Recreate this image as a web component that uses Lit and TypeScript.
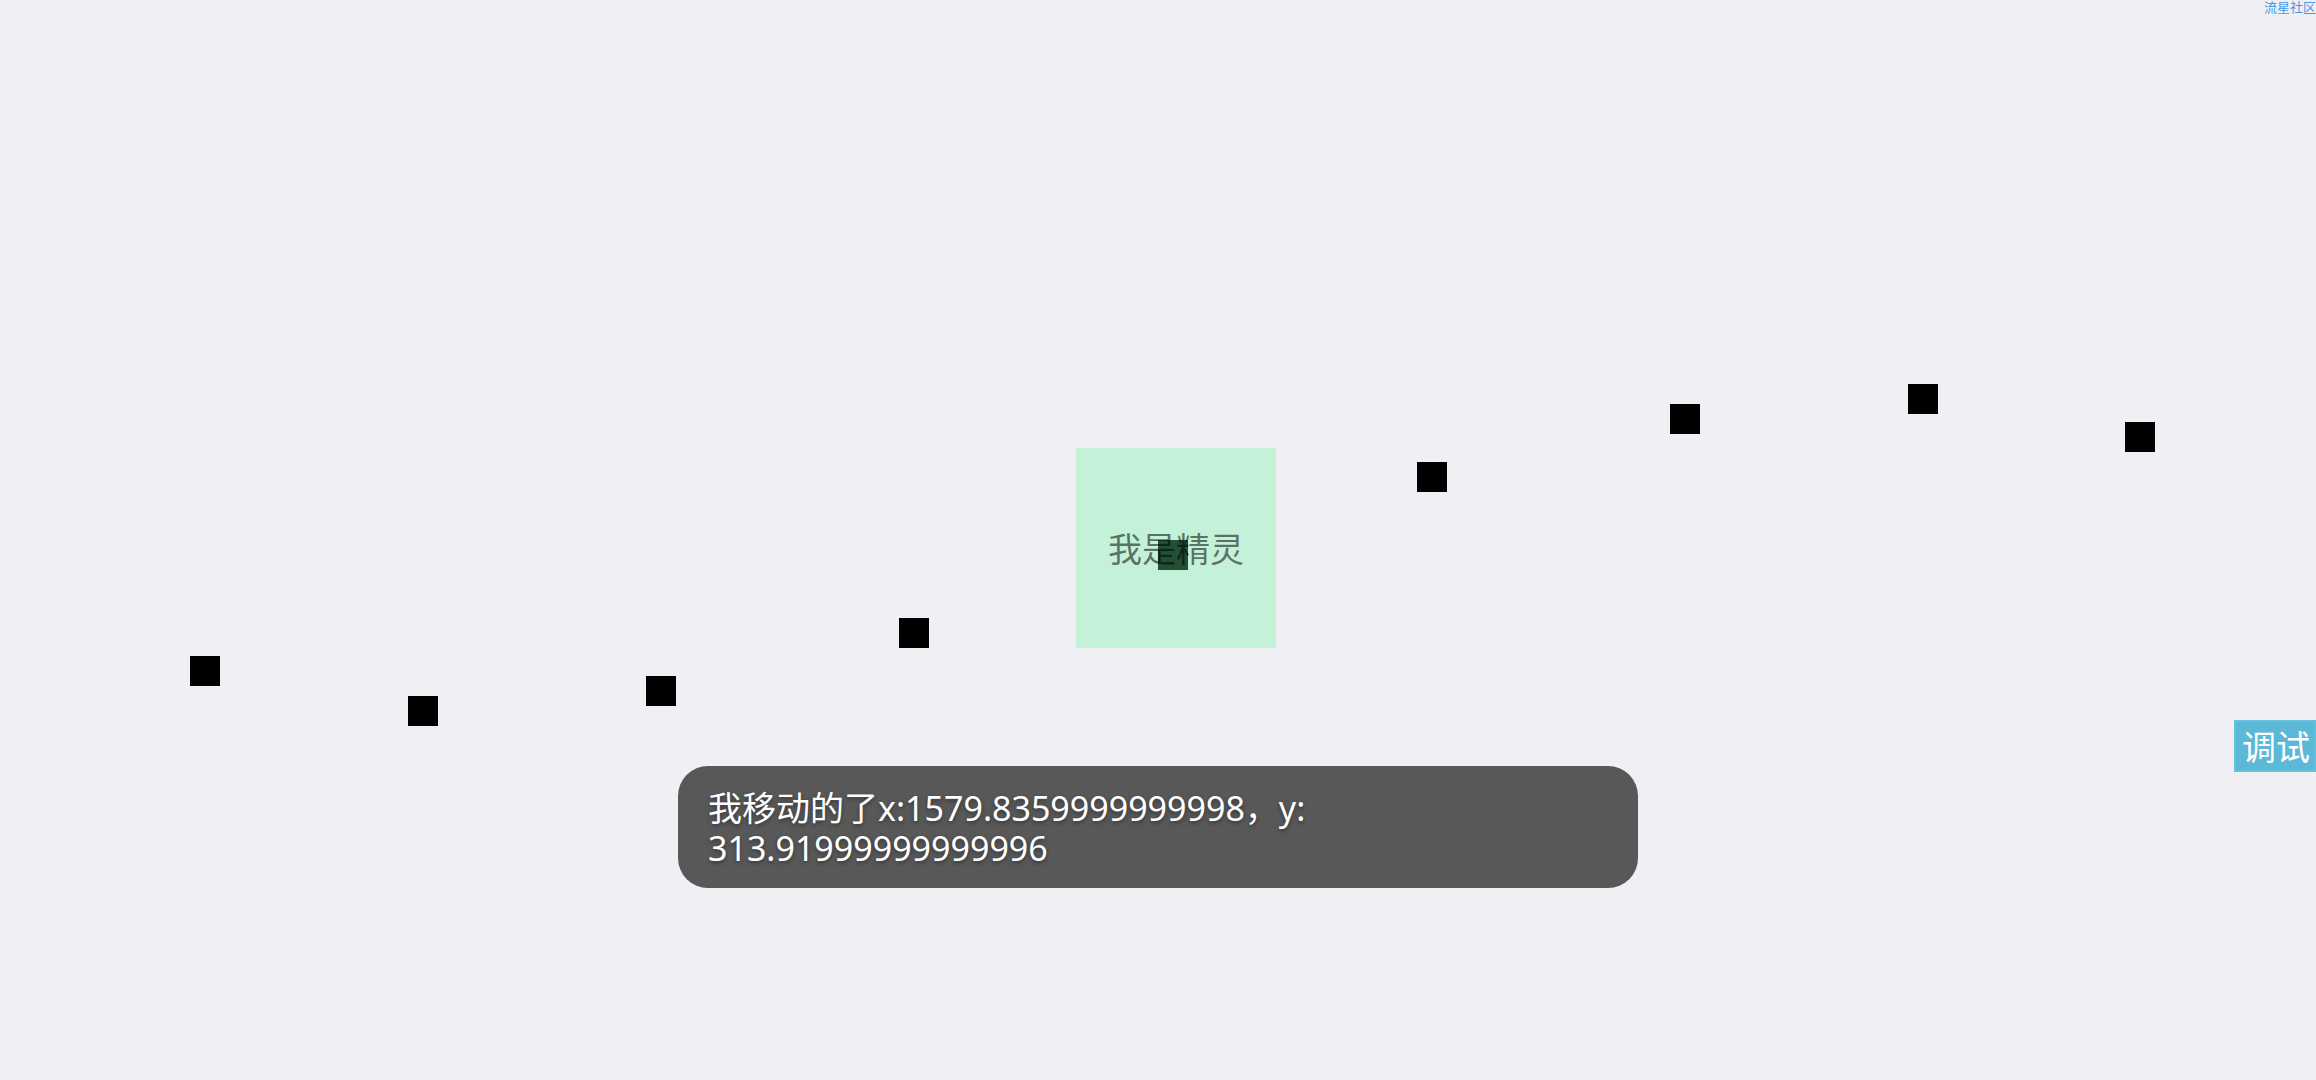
import { LitElement, html, css } from "lit";
import { customElement } from "lit/decorators.js";

interface Point {
  x: number;
  y: number;
}

const POINTS: Point[] = [
  { x: 190, y: 656 },
  { x: 408, y: 696 },
  { x: 646, y: 676 },
  { x: 899, y: 618 },
  { x: 1158, y: 540 },
  { x: 1417, y: 462 },
  { x: 1670, y: 404 },
  { x: 1908, y: 384 },
  { x: 2125, y: 422 },
];

@customElement("app-root")
export class AppRoot extends LitElement {
  static styles = css`
    :host {
      display: block;
      font-family: "Noto Sans", "Noto Sans CJK SC", sans-serif;
    }
    .stage {
      position: relative;
      min-height: 100vh;
      overflow: hidden;
      background: #efeff4;
    }
    .point {
      position: absolute;
      width: 30px;
      height: 30px;
      background: #000;
    }
    .sprite {
      position: absolute;
      left: 1076px;
      top: 448px;
      display: flex;
      align-items: center;
      justify-content: center;
      width: 200px;
      height: 200px;
      background: rgba(103, 250, 162, 0.32);
      color: rgba(0, 0, 0, 0.54);
      font-family: "Noto Sans CJK SC", sans-serif;
      font-size: 34px;
      line-height: 40px;
    }
    .community {
      position: absolute;
      top: 0;
      right: 0;
      color: #3f9bea;
      font-family: "Noto Sans CJK SC", sans-serif;
      font-size: 13px;
      line-height: 13px;
      text-decoration: none;
    }
    .debug {
      position: absolute;
      right: 0;
      top: 720px;
      box-sizing: border-box;
      height: 52px;
      margin: 0;
      padding: 0 4px 0 6px;
      border: 2px solid #62c2dd;
      background: #5bb8d6;
      color: #fff;
      font-family: "Noto Sans CJK SC", sans-serif;
      font-size: 34px;
      line-height: 48px;
    }
    .toast {
      position: absolute;
      left: 50%;
      bottom: 192px;
      transform: translateX(-50%);
      box-sizing: border-box;
      width: 960px;
      max-width: 100%;
      padding: 22px 30px 20px;
      border-radius: 30px;
      background: #585858;
      color: #fff;
      font-size: 34px;
      line-height: 40px;
      text-shadow: 0 2px 4px rgba(0, 0, 0, 0.4);
    }
  `;

  render() {
    return html`
      <main class="stage">
        ${POINTS.map(
          (p) => html`<div class="point" style="left:${p.x}px;top:${p.y}px"></div>`
        )}
        <div class="sprite">我是精灵</div>
        <a class="community" href="#">流星社区</a>
        <button class="debug" type="button">调试</button>
        <div class="toast" role="status">
          我移动的了x:1579.8359999999998，y:<br />313.91999999999996
        </div>
      </main>
    `;
  }
}
